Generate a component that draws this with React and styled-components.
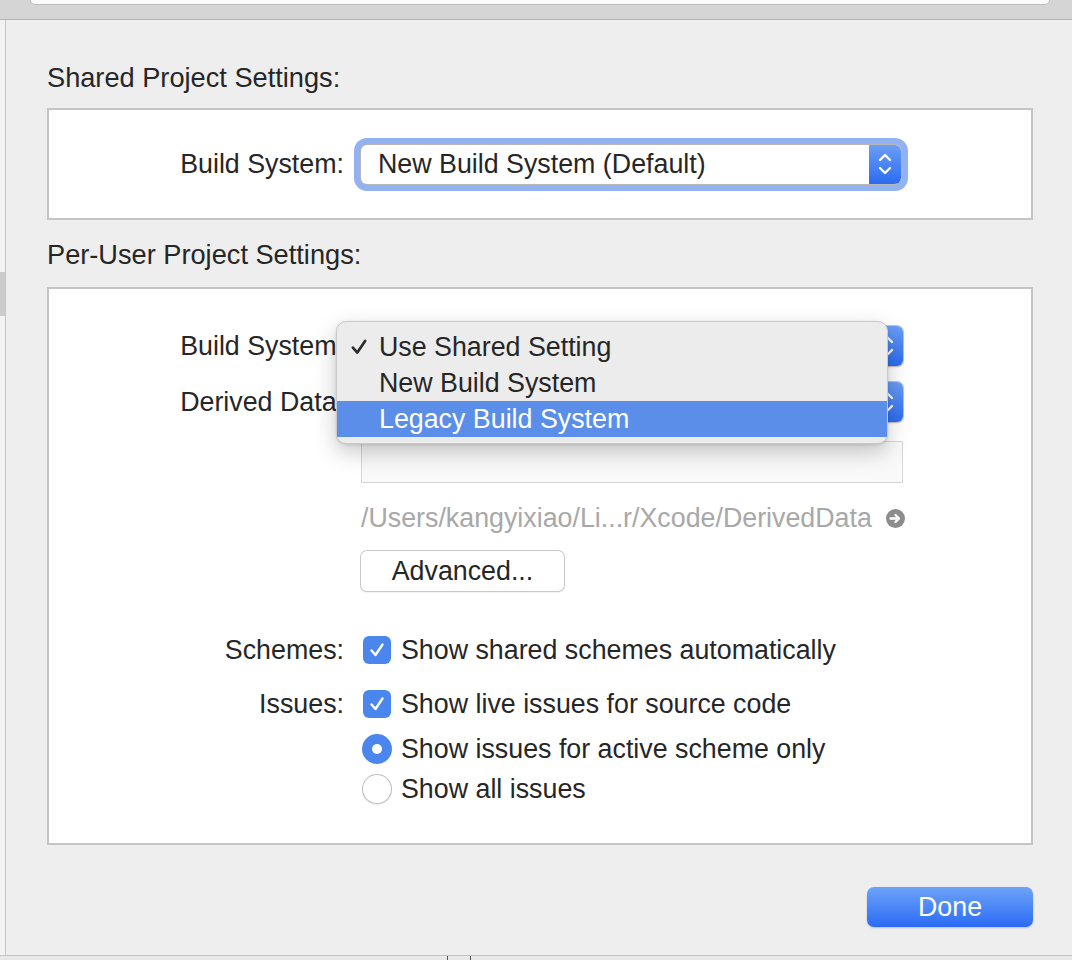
import styled, { createGlobalStyle } from 'styled-components';

const GlobalStyle = createGlobalStyle`
  html, body {
    margin: 0;
    padding: 0;
    background: #e9e9e9;
  }
  * { box-sizing: border-box; }
`;

const Page = styled.div`
    width: 1072px;
    height: 960px;
    overflow: hidden;
    display: flex;
    flex-direction: column;
    font-family: "Liberation Sans", Arial, sans-serif;
    color: #262626;
    font-size: 26.8px;
`;
const TopBar = styled.div`
    height: 20px;
    flex: none;
    background: #d5d5d5;
    border-bottom: 1px solid #b3b3b3;
    padding-left: 30px;
`;
const SearchEdge = styled.div`
    width: 1020px;
    height: 5px;
    background: #fafafa;
    border: 1px solid #bdbdbd;
    border-top: none;
    border-radius: 0 0 8px 8px;
`;
const Middle = styled.div`
    flex: 1;
    display: flex;
    min-height: 0;
`;
const LeftStrip = styled.div`
    width: 6px;
    flex: none;
    background: #f3f3f3;
    border-right: 1px solid #c6c6c6;
    padding-top: 252px;
`;
const StripMark = styled.div`
    height: 44px;
    background: #cbcbcb;
`;
const Sheet = styled.div`
    flex: 1;
    background: #eeeeee;
    padding: 43px 39px 0 41px;
    display: flex;
    flex-direction: column;
`;
const BottomStrip = styled.div`
    height: 5px;
    flex: none;
    background: #e8e8e8;
    border-top: 1px solid #c4c4c4;
    padding-left: 447px;
    display: flex;
    gap: 22px;
`;
const Tick = styled.div`
    width: 1px;
    height: 100%;
    background: #555;
`;
const SectionTitle = styled.div`
    line-height: 30px;
    font-size: 27.2px;
    margin-top: ${(p) => p.top || 0}px;
    margin-bottom: ${(p) => p.bottom || 0}px;
`;
const Box = styled.div`
    position: relative;
    background: #ffffff;
    border: 2px solid #c4c4c4;
    height: ${(p) => p.h}px;
    padding-top: ${(p) => p.pt || 0}px;
    display: flex;
    flex-direction: column;
    justify-content: ${(p) => (p.center ? 'center' : 'flex-start')};
`;
const Row = styled.div`
    display: grid;
    grid-template-columns: 295px 542px;
    column-gap: 17px;
    align-items: center;
    margin-top: ${(p) => p.mt || 0}px;
`;
const Label = styled.div`
    text-align: right;
    line-height: 30px;
    white-space: nowrap;
`;
const Popup = styled.div`
    height: ${(p) => p.h || 40}px;
    width: ${(p) => p.w || 542}px;
    display: flex;
    border-radius: 6px;
    background: #fff;
    box-shadow: ${(p) => (p.focus
        ? '0 0 0 1px #b6b6b6, 0 0 0 7px #93b2f2'
        : '0 0 0 1px #c4c4c4, 0 1px 2px rgba(0,0,0,0.2)')};
`;
const PopupText = styled.div`
    flex: 1;
    padding-left: 17px;
    line-height: ${(p) => p.h || 40}px;
    white-space: nowrap;
`;
const Stepper = styled.div`
    width: 32px;
    flex: none;
    border-radius: 0 6px 6px 0;
    background: linear-gradient(#6a9ef6, #2c6bf1);
    display: flex;
    align-items: center;
    justify-content: center;
`;
const Menu = styled.div`
    position: absolute;
    left: 287px;
    top: 32px;
    width: 552px;
    height: 123px;
    background: #ececec;
    border: 1px solid #c9c9c9;
    border-radius: 10px;
    box-shadow: 0 8px 22px rgba(0, 0, 0, 0.22), 0 1px 3px rgba(0,0,0,0.12);
    padding: 7px 0;
    z-index: 2;
`;
const MenuItem = styled.div`
    height: 36px;
    display: flex;
    align-items: center;
    background: ${(p) => (p.active ? '#5a8ee9' : 'transparent')};
    color: ${(p) => (p.active ? '#ffffff' : '#262626')};
    line-height: 36px;
`;
const CheckSlot = styled.div`
    width: 42px;
    padding-left: 12px;
    display: flex;
    align-items: center;
`;
const TextField = styled.div`
    width: 542px;
    height: 42px;
    background: #f9f9f9;
    border: 1px solid #d6d6d6;
`;
const PathLine = styled.div`
    display: flex;
    align-items: center;
    justify-content: space-between;
    width: 544px;
    line-height: 30px;
    color: #a8a8a8;
    white-space: nowrap;
`;
const PushButton = styled.div`
    width: 203px;
    height: 40px;
    background: #ffffff;
    border-radius: 6px;
    box-shadow: 0 0 0 1px #c9c9c9, 0 1px 2px rgba(0,0,0,0.18);
    text-align: center;
    line-height: 40px;
`;
const Option = styled.div`
    display: flex;
    align-items: center;
    gap: 10px;
    line-height: 30px;
    white-space: nowrap;
    margin-left: 2px;
`;
const CheckBox = styled.div`
    width: 28px;
    height: 28px;
    border-radius: 6px;
    background: #4a86ee;
    display: flex;
    align-items: center;
    justify-content: center;
`;
const Radio = styled.div`
    width: 30px;
    height: 30px;
    border-radius: 50%;
    margin-left: -1px;
    margin-right: -1px;
    display: flex;
    align-items: center;
    justify-content: center;
    background: ${(p) => (p.on ? '#4a86ee' : '#ffffff')};
    box-shadow: ${(p) => (p.on ? 'none' : 'inset 0 0 0 1px #bdbdbd, 0 1px 1px rgba(0,0,0,0.12)')};
`;
const Dot = styled.div`
    width: 10px;
    height: 10px;
    border-radius: 50%;
    background: #fff;
`;
const Footer = styled.div`
    display: flex;
    justify-content: flex-end;
    padding-top: 42px;
`;
const DoneButton = styled.div`
    width: 166px;
    height: 40px;
    border-radius: 7px;
    background: linear-gradient(#6da3f8, #2b6bf5);
    box-shadow: 0 1px 2px rgba(0,0,0,0.2);
    color: #fff;
    text-align: center;
    line-height: 40px;
`;

const Chevrons = () => (
    <svg width="16" height="26" viewBox="0 0 16 26">
        <path d="M3 9 L8 4 L13 9" fill="none" stroke="#fff" strokeWidth="2.4" strokeLinecap="round" strokeLinejoin="round" />
        <path d="M3 17 L8 22 L13 17" fill="none" stroke="#fff" strokeWidth="2.4" strokeLinecap="round" strokeLinejoin="round" />
    </svg>
);

const Tickmark = ({ color = '#fff', size = 18 }) => (
    <svg width={size} height={size} viewBox="0 0 18 18">
        <path d="M3.5 9.5 L7.5 14 L14.5 3.5" fill="none" stroke={color} strokeWidth="2.4" strokeLinecap="round" strokeLinejoin="round" />
    </svg>
);

const RevealArrow = () => (
    <svg width="19" height="19" viewBox="0 0 19 19">
        <circle cx="9.5" cy="9.5" r="9.5" fill="#8c8c8c" />
        <path d="M4.5 9.5 H12.5 M9.5 6 L13 9.5 L9.5 13" fill="none" stroke="#fff" strokeWidth="2.4" strokeLinecap="round" strokeLinejoin="round" />
    </svg>
);

const App = () => {
    return (
        <>
            <GlobalStyle />
            <Page>
                <TopBar>
                    <SearchEdge />
                </TopBar>
                <Middle>
                    <LeftStrip>
                        <StripMark />
                    </LeftStrip>
                    <Sheet>
                        <SectionTitle bottom={15}>Shared Project Settings:</SectionTitle>
                        <Box h={112} center>
                            <Row>
                                <Label>Build System:</Label>
                                <Popup focus w={540} h={39}>
                                    <PopupText h={39}>New Build System (Default)</PopupText>
                                    <Stepper><Chevrons /></Stepper>
                                </Popup>
                            </Row>
                        </Box>

                        <SectionTitle top={20} bottom={17}>Per-User Project Settings:</SectionTitle>
                        <Box h={558} pt={37}>
                            <Menu>
                                <MenuItem>
                                    <CheckSlot><Tickmark color="#2a2a2a" size={20} /></CheckSlot>
                                    Use Shared Setting
                                </MenuItem>
                                <MenuItem>
                                    <CheckSlot />
                                    New Build System
                                </MenuItem>
                                <MenuItem active>
                                    <CheckSlot />
                                    Legacy Build System
                                </MenuItem>
                            </Menu>
                            <Row>
                                <Label>Build System:</Label>
                                <Popup>
                                    <PopupText />
                                    <Stepper><Chevrons /></Stepper>
                                </Popup>
                            </Row>
                            <Row mt={16}>
                                <Label>Derived Data:</Label>
                                <Popup>
                                    <PopupText />
                                    <Stepper><Chevrons /></Stepper>
                                </Popup>
                            </Row>
                            <Row mt={19}>
                                <span />
                                <TextField />
                            </Row>
                            <Row mt={20}>
                                <span />
                                <PathLine>
                                    /Users/kangyixiao/Li...r/Xcode/DerivedData
                                    <RevealArrow />
                                </PathLine>
                            </Row>
                            <Row mt={18}>
                                <span />
                                <PushButton>Advanced...</PushButton>
                            </Row>
                            <Row mt={44}>
                                <Label>Schemes:</Label>
                                <Option>
                                    <CheckBox><Tickmark /></CheckBox>
                                    Show shared schemes automatically
                                </Option>
                            </Row>
                            <Row mt={24}>
                                <Label>Issues:</Label>
                                <Option>
                                    <CheckBox><Tickmark /></CheckBox>
                                    Show live issues for source code
                                </Option>
                            </Row>
                            <Row mt={15}>
                                <span />
                                <Option>
                                    <Radio on><Dot /></Radio>
                                    Show issues for active scheme only
                                </Option>
                            </Row>
                            <Row mt={10}>
                                <span />
                                <Option>
                                    <Radio />
                                    Show all issues
                                </Option>
                            </Row>
                        </Box>
                        <Footer>
                            <DoneButton>Done</DoneButton>
                        </Footer>
                    </Sheet>
                </Middle>
                <BottomStrip>
                    <Tick />
                    <Tick />
                </BottomStrip>
            </Page>
        </>
    );
};

export default App;
